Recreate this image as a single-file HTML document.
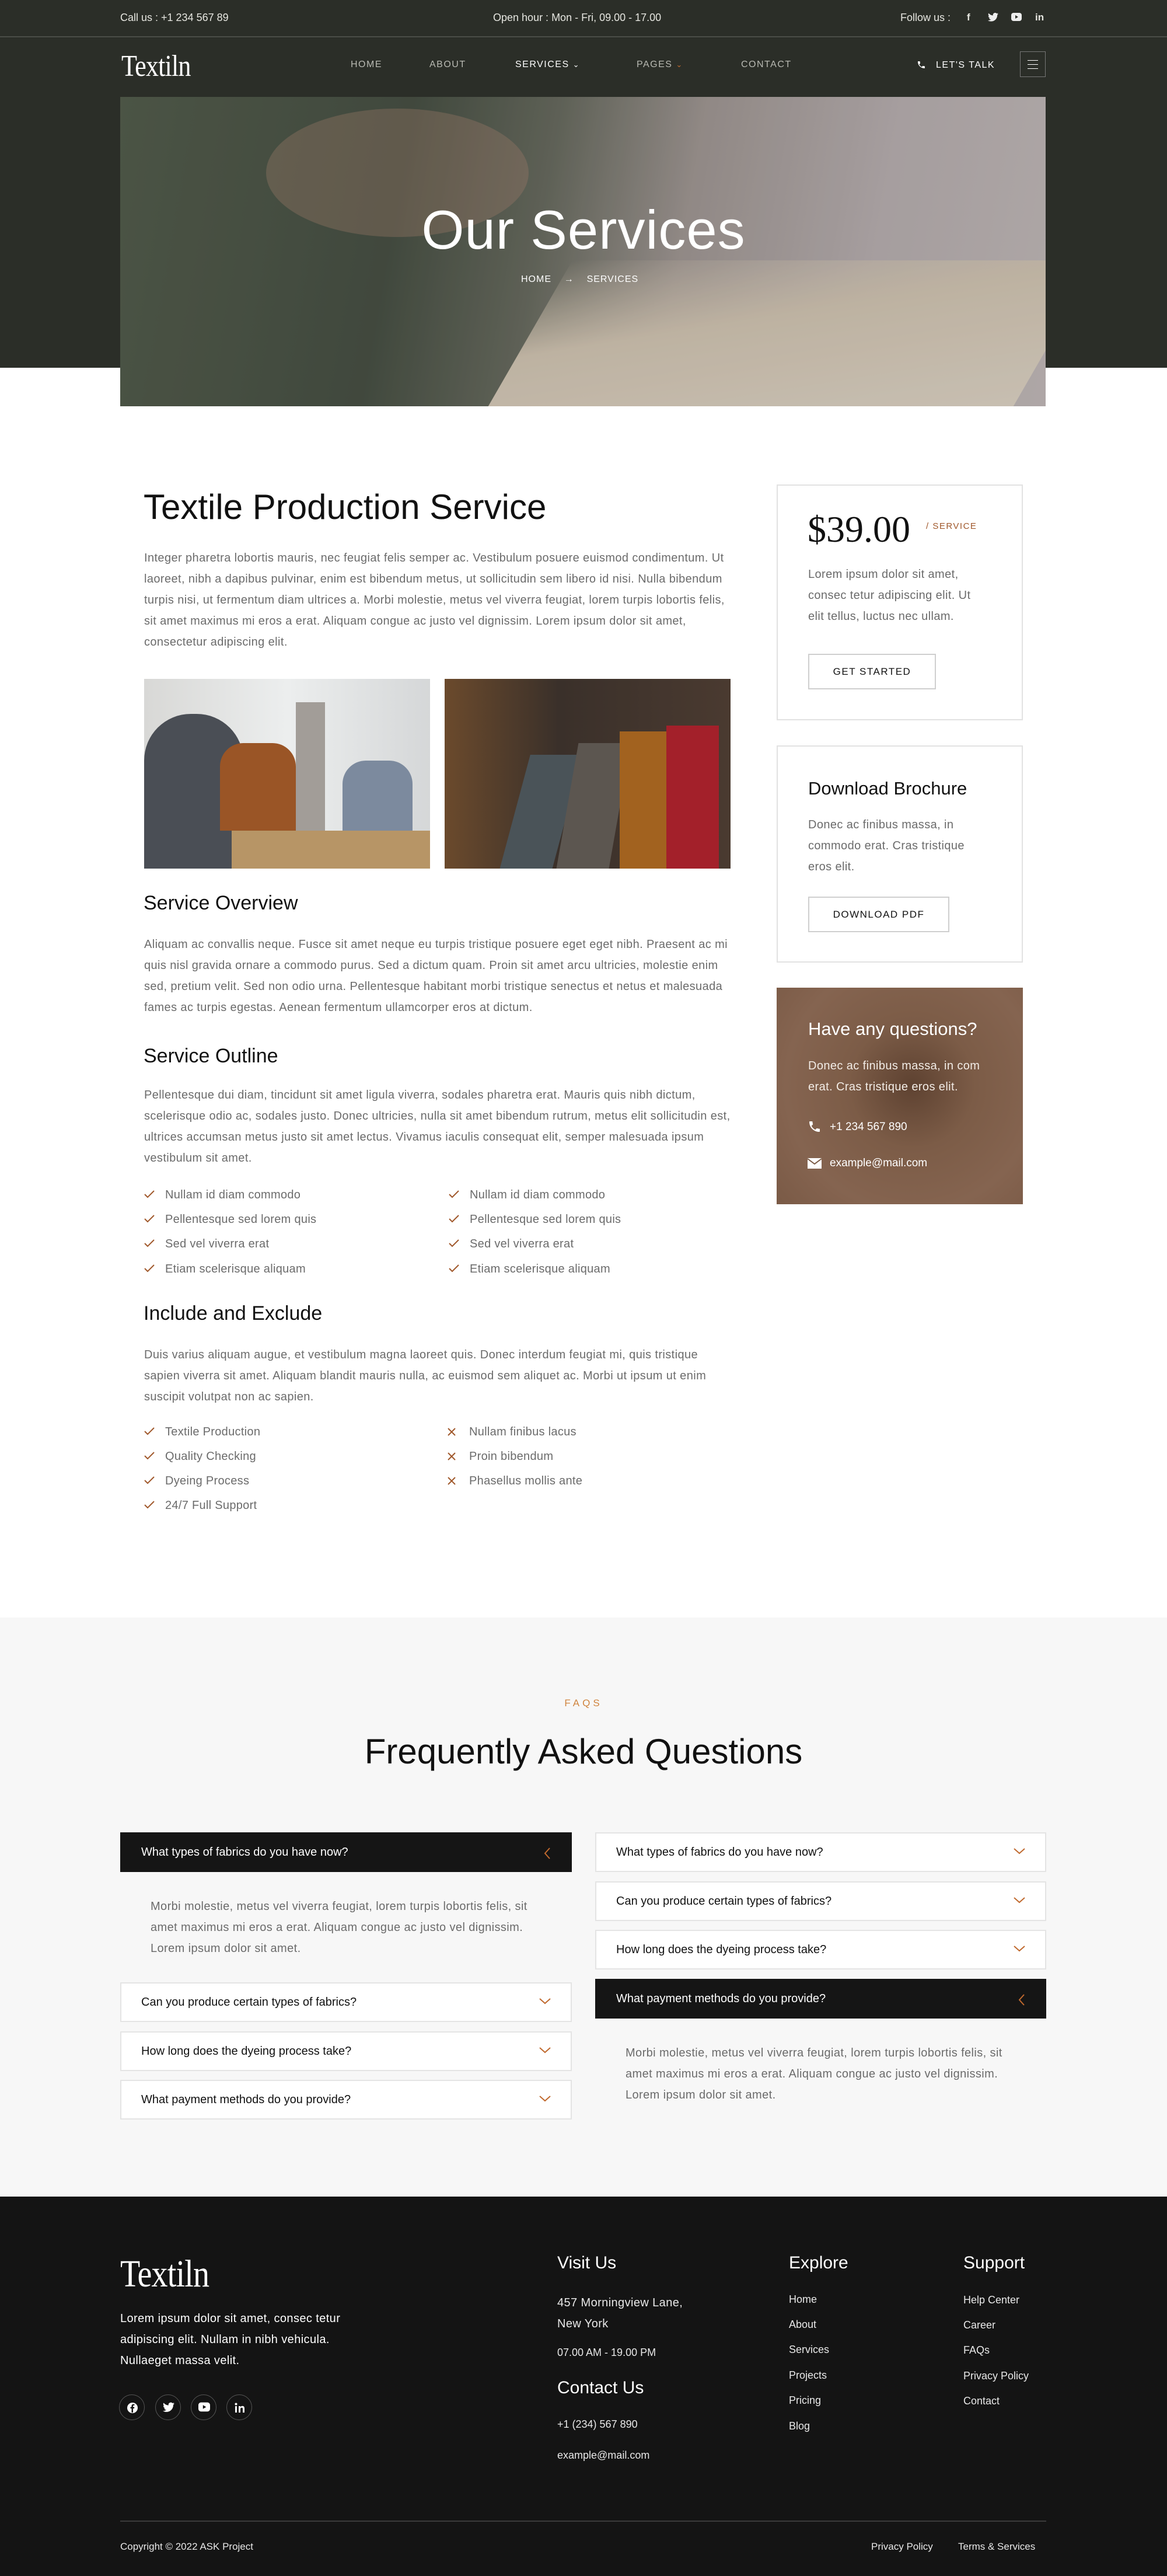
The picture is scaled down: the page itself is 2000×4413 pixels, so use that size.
<!DOCTYPE html>
<html><head><meta charset="utf-8">
<style>
*{margin:0;padding:0;box-sizing:border-box}
body{width:2000px;height:4413px;position:relative;background:#fff;font-family:"Liberation Sans",sans-serif;overflow:hidden}
.a{position:absolute}
.hdr{left:0;top:0;width:2000px;height:630px;background:#2b2e28}
.top{color:#e6e6e0;font-size:18px;top:20px}
.nav{color:#b9bab3;font-size:16px;letter-spacing:1.5px;top:102px}
.h2{font-size:34px;color:#111;font-weight:400}
.p{font-size:20px;letter-spacing:.4px;line-height:36px;color:#6b6b6b}
.li{font-size:20px;letter-spacing:.3px;color:#6b6b6b;height:30px;line-height:30px}
.li svg{position:absolute;left:-36px;top:7px}
.card{border:2px solid #e2e2e2;background:#fff}
.btn{border:2px solid #cfcfcf;font-size:17px;letter-spacing:1.5px;color:#111;text-align:center}
.q{height:68px;border:2px solid #e4e4e4;background:#fff;font-size:20px;color:#111;line-height:64px;padding-left:34px}
.q.d{background:#151515;border-color:#151515;color:#fff}
.q svg{position:absolute;right:34px;top:24px}
.fh{font-size:30px;color:#fff}
.fl{font-size:18px;color:#e8e8e8}
.soc{width:44px;height:44px;border:1px solid #555;border-radius:50%;top:4102px}
.soc svg{position:absolute;left:12px;top:12px}
</style></head><body>
<div class="a hdr"></div>
<div class="a" style="left:0;top:62px;width:2000px;height:2px;background:#4a4d47"></div>
<div class="a top" style="left:206px">Call us : +1 234 567 89</div>
<div class="a top" style="left:845px">Open hour : Mon - Fri, 09.00 - 17.00</div>
<div class="a top" style="left:1543px">Follow us :</div>
<div class="a top" style="left:1657px;font-weight:bold;font-size:17px">f</div>
<svg class="a" style="left:1693px;top:22px" width="18" height="15" viewBox="0 0 24 20"><path fill="#eee" d="M24 2.4a10 10 0 0 1-2.8.8A5 5 0 0 0 23.3.4a10 10 0 0 1-3.1 1.2A4.9 4.9 0 0 0 11.8 6 14 14 0 0 1 1.7.9a4.9 4.9 0 0 0 1.5 6.6A4.9 4.9 0 0 1 1 6.9a4.9 4.9 0 0 0 3.9 4.8 5 5 0 0 1-2.2.1 4.9 4.9 0 0 0 4.6 3.4A9.9 9.9 0 0 1 0 17.3 14 14 0 0 0 7.5 19.5c9.1 0 14-7.5 14-14v-.6A10 10 0 0 0 24 2.4z"/></svg>
<svg class="a" style="left:1733px;top:22px" width="18" height="15" viewBox="0 0 18 15"><rect width="18" height="14" rx="4" fill="#eee"/><path d="M7 4v6l5-3z" fill="#2b2e28"/></svg>
<div class="a top" style="left:1774px;font-weight:bold;font-size:17px">in</div>

<div class="a" style="left:208px;top:84px;font-family:'Liberation Serif',serif;font-size:52px;color:#fff;letter-spacing:-1px;transform:scaleX(.85);transform-origin:left">Textiln</div>
<div class="a nav" style="left:601px">HOME</div>
<div class="a nav" style="left:736px">ABOUT</div>
<div class="a nav" style="left:883px;color:#fff">SERVICES <span style="font-size:13px">&#8964;</span></div>
<div class="a nav" style="left:1091px">PAGES <span style="color:#c0692e;font-size:13px">&#8964;</span></div>
<div class="a nav" style="left:1270px">CONTACT</div>
<svg class="a" style="left:1571px;top:101px" width="16" height="20" viewBox="0 0 24 24"><path fill="#fff" d="M6.6 10.8a15 15 0 0 0 6.6 6.6l2.2-2.2c.3-.3.7-.4 1-.2a11 11 0 0 0 3.6.6c.6 0 1 .4 1 1V20c0 .6-.4 1-1 1A17 17 0 0 1 3 4c0-.6.4-1 1-1h3.5c.6 0 1 .4 1 1 0 1.3.2 2.5.6 3.6.1.3 0 .7-.2 1z"/></svg>
<div class="a" style="left:1604px;top:103px;color:#fff;font-size:16px;letter-spacing:1.5px">LET'S TALK</div>
<div class="a" style="left:1748px;top:88px;width:44px;height:44px;border:1px solid #777"><div class="a" style="left:12px;top:14px;width:18px;height:1px;background:#fff;box-shadow:0 7px #fff,0 14px #fff"></div></div>

<div class="a" style="left:206px;top:166px;width:1586px;height:530px;overflow:hidden;background:linear-gradient(100deg,#56604f 0%,#4a5346 30%,#6b6e62 45%,#a59c98 60%,#bdb4b5 80%,#c6bebd 100%)">
 <div class="a" style="left:700px;top:280px;width:900px;height:260px;background:linear-gradient(170deg,rgba(220,205,185,0) 0%,#d8cbb8 40%,#e4dacb 100%);transform:skewX(-30deg)"></div>
 <div class="a" style="left:250px;top:20px;width:450px;height:220px;background:rgba(180,140,120,.35);border-radius:50%"></div>
 <div class="a" style="left:0;top:0;width:100%;height:100%;background:rgba(0,0,0,.12)"></div>
</div>
<div class="a" style="left:0;top:340px;width:2000px;text-align:center;color:#fff;font-size:94px;font-weight:300;letter-spacing:1px">Our Services</div>
<div class="a" style="left:893px;top:470px;color:#fff;font-size:16px;letter-spacing:1px">HOME &nbsp;&nbsp;&nbsp;&rarr;&nbsp;&nbsp;&nbsp; SERVICES</div>

<div class="a" style="left:246px;top:834px;font-size:60px;color:#111">Textile Production Service</div>
<div class="a p" style="left:247px;top:938px;width:1010px">Integer pharetra lobortis mauris, nec feugiat felis semper ac. Vestibulum posuere euismod condimentum. Ut laoreet, nibh a dapibus pulvinar, enim est bibendum metus, ut sollicitudin sem libero id nisi. Nulla bibendum turpis nisi, ut fermentum diam ultrices a. Morbi molestie, metus vel viverra feugiat, lorem turpis lobortis felis, sit amet maximus mi eros a erat. Aliquam congue ac justo vel dignissim. Lorem ipsum dolor sit amet, consectetur adipiscing elit.</div>
<div class="a" style="left:247px;top:1163px;width:490px;height:325px;overflow:hidden;background:linear-gradient(90deg,#d8d8d6,#eceeee 50%,#d5d7d8)">
 <div class="a" style="left:0;top:60px;width:170px;height:270px;background:#4a4e55;border-radius:80px 80px 0 0"></div>
 <div class="a" style="left:130px;top:110px;width:130px;height:150px;background:#9a5526;border-radius:40px 40px 0 0"></div>
 <div class="a" style="left:260px;top:40px;width:50px;height:230px;background:#a29d98"></div>
 <div class="a" style="left:340px;top:140px;width:120px;height:120px;background:#7c8a9e;border-radius:40px 40px 0 0"></div>
 <div class="a" style="left:150px;top:260px;width:340px;height:65px;background:#b79566"></div>
</div>
<div class="a" style="left:762px;top:1163px;width:490px;height:325px;overflow:hidden;background:linear-gradient(90deg,#6b4a2c,#3a302a 40%,#4a3a30)">
 <div class="a" style="left:120px;top:130px;width:90px;height:200px;background:#4a5358;transform:skewX(-15deg)"></div>
 <div class="a" style="left:210px;top:110px;width:90px;height:220px;background:#5c5650;transform:skewX(-10deg)"></div>
 <div class="a" style="left:300px;top:90px;width:80px;height:240px;background:#a2621f"></div>
 <div class="a" style="left:380px;top:80px;width:90px;height:250px;background:#a3202a"></div>
</div>
<div class="a h2" style="left:246px;top:1528px">Service Overview</div>
<div class="a p" style="left:247px;top:1600px;width:1010px">Aliquam ac convallis neque. Fusce sit amet neque eu turpis tristique posuere eget eget nibh. Praesent ac mi quis nisl gravida ornare a commodo purus. Sed a dictum quam. Proin sit amet arcu ultricies, molestie enim sed, pretium velit. Sed non odio urna. Pellentesque habitant morbi tristique senectus et netus et malesuada fames ac turpis egestas. Aenean fermentum ullamcorper eros at dictum.</div>
<div class="a h2" style="left:246px;top:1790px">Service Outline</div>
<div class="a p" style="left:247px;top:1858px;width:1010px">Pellentesque dui diam, tincidunt sit amet ligula viverra, sodales pharetra erat. Mauris quis nibh dictum, scelerisque odio ac, sodales justo. Donec ultricies, nulla sit amet bibendum rutrum, metus elit sollicitudin est, ultrices accumsan metus justo sit amet lectus. Vivamus iaculis consequat elit, semper malesuada ipsum vestibulum sit amet.</div>

<div class="a li" style="left:283px;top:2032px">Nullam id diam commodo<svg width="18" height="14"><path d="M1 7l5 5L17 1" stroke="#a0582b" stroke-width="2" fill="none"/></svg></div>
<div class="a li" style="left:283px;top:2074px">Pellentesque sed lorem quis<svg width="18" height="14"><path d="M1 7l5 5L17 1" stroke="#a0582b" stroke-width="2" fill="none"/></svg></div>
<div class="a li" style="left:283px;top:2116px">Sed vel viverra erat<svg width="18" height="14"><path d="M1 7l5 5L17 1" stroke="#a0582b" stroke-width="2" fill="none"/></svg></div>
<div class="a li" style="left:283px;top:2159px">Etiam scelerisque aliquam<svg width="18" height="14"><path d="M1 7l5 5L17 1" stroke="#a0582b" stroke-width="2" fill="none"/></svg></div>
<div class="a li" style="left:805px;top:2032px">Nullam id diam commodo<svg width="18" height="14"><path d="M1 7l5 5L17 1" stroke="#a0582b" stroke-width="2" fill="none"/></svg></div>
<div class="a li" style="left:805px;top:2074px">Pellentesque sed lorem quis<svg width="18" height="14"><path d="M1 7l5 5L17 1" stroke="#a0582b" stroke-width="2" fill="none"/></svg></div>
<div class="a li" style="left:805px;top:2116px">Sed vel viverra erat<svg width="18" height="14"><path d="M1 7l5 5L17 1" stroke="#a0582b" stroke-width="2" fill="none"/></svg></div>
<div class="a li" style="left:805px;top:2159px">Etiam scelerisque aliquam<svg width="18" height="14"><path d="M1 7l5 5L17 1" stroke="#a0582b" stroke-width="2" fill="none"/></svg></div>

<div class="a h2" style="left:246px;top:2231px">Include and Exclude</div>
<div class="a p" style="left:247px;top:2303px;width:1010px">Duis varius aliquam augue, et vestibulum magna laoreet quis. Donec interdum feugiat mi, quis tristique sapien viverra sit amet. Aliquam blandit mauris nulla, ac euismod sem aliquet ac. Morbi ut ipsum ut enim suscipit volutpat non ac sapien.</div>
<div class="a li" style="left:283px;top:2438px">Textile Production<svg width="18" height="14"><path d="M1 7l5 5L17 1" stroke="#a0582b" stroke-width="2" fill="none"/></svg></div>
<div class="a li" style="left:283px;top:2480px">Quality Checking<svg width="18" height="14"><path d="M1 7l5 5L17 1" stroke="#a0582b" stroke-width="2" fill="none"/></svg></div>
<div class="a li" style="left:283px;top:2522px">Dyeing Process<svg width="18" height="14"><path d="M1 7l5 5L17 1" stroke="#a0582b" stroke-width="2" fill="none"/></svg></div>
<div class="a li" style="left:283px;top:2564px">24/7 Full Support<svg width="18" height="14"><path d="M1 7l5 5L17 1" stroke="#a0582b" stroke-width="2" fill="none"/></svg></div>
<div class="a li" style="left:804px;top:2438px">Nullam finibus lacus<svg width="16" height="16" style="left:-38px"><path d="M2 2l12 12M14 2L2 14" stroke="#a0582b" stroke-width="2"/></svg></div>
<div class="a li" style="left:804px;top:2480px">Proin bibendum<svg width="16" height="16" style="left:-38px"><path d="M2 2l12 12M14 2L2 14" stroke="#a0582b" stroke-width="2"/></svg></div>
<div class="a li" style="left:804px;top:2522px">Phasellus mollis ante<svg width="16" height="16" style="left:-38px"><path d="M2 2l12 12M14 2L2 14" stroke="#a0582b" stroke-width="2"/></svg></div>

<div class="a card" style="left:1331px;top:830px;width:422px;height:404px"></div>
<div class="a" style="left:1384px;top:870px;font-family:'Liberation Serif',serif;font-size:64px;color:#111">$39.00</div>
<div class="a" style="left:1587px;top:893px;font-size:15px;letter-spacing:1.5px;color:#a0582b">/ SERVICE</div>
<div class="a p" style="left:1385px;top:966px;width:310px">Lorem ipsum dolor sit amet, consec tetur adipiscing elit. Ut elit tellus, luctus nec ullam.</div>
<div class="a btn" style="left:1385px;top:1120px;width:219px;height:61px;line-height:57px">GET STARTED</div>

<div class="a card" style="left:1331px;top:1277px;width:422px;height:372px"></div>
<div class="a" style="left:1385px;top:1333px;font-size:31px;color:#111">Download Brochure</div>
<div class="a p" style="left:1385px;top:1395px;width:300px">Donec ac finibus massa, in commodo erat. Cras tristique eros elit.</div>
<div class="a btn" style="left:1385px;top:1536px;width:242px;height:61px;line-height:57px">DOWNLOAD PDF</div>

<div class="a" style="left:1331px;top:1692px;width:422px;height:371px;background:radial-gradient(circle at 55% 45%,#5e4231 0%,#7c5c47 35%,#856450 70%,#7a5a46 100%)"></div>
<div class="a" style="left:1385px;top:1745px;font-size:31px;color:#fff">Have any questions?</div>
<div class="a p" style="left:1385px;top:1808px;width:330px;color:#f2ece6">Donec ac finibus massa, in com erat. Cras tristique eros elit.</div>
<svg class="a" style="left:1384px;top:1918px" width="24" height="24" viewBox="0 0 24 24"><path fill="#fff" d="M6.6 10.8a15 15 0 0 0 6.6 6.6l2.2-2.2c.3-.3.7-.4 1-.2a11 11 0 0 0 3.6.6c.6 0 1 .4 1 1V20c0 .6-.4 1-1 1A17 17 0 0 1 3 4c0-.6.4-1 1-1h3.5c.6 0 1 .4 1 1 0 1.3.2 2.5.6 3.6.1.3 0 .7-.2 1z"/></svg>
<div class="a" style="left:1422px;top:1920px;font-size:19px;color:#fff">+1 234 567 890</div>
<svg class="a" style="left:1384px;top:1984px" width="24" height="18" viewBox="0 0 24 18"><rect width="24" height="18" fill="#fff"/><path d="M0 1l12 9L24 1" stroke="#7c5c47" stroke-width="2" fill="none"/></svg>
<div class="a" style="left:1422px;top:1982px;font-size:19px;color:#fff">example@mail.com</div>

<div class="a" style="left:0;top:2771px;width:2000px;height:992px;background:#f7f7f7"></div>
<div class="a" style="left:0;top:2908px;width:2000px;text-align:center;font-size:17px;letter-spacing:5px;color:#d0843e">FAQS</div>
<div class="a" style="left:0;top:2966px;width:2000px;text-align:center;font-size:60px;color:#111">Frequently Asked Questions</div>

<div class="a q d" style="left:206px;top:3139px;width:774px">What types of fabrics do you have now?<svg width="12" height="20"><path d="M10 1L2 10l8 9" stroke="#c0692e" stroke-width="2" fill="none"/></svg></div>
<div class="a p" style="left:258px;top:3248px;width:690px">Morbi molestie, metus vel viverra feugiat, lorem turpis lobortis felis, sit amet maximus mi eros a erat. Aliquam congue ac justo vel dignissim. Lorem ipsum dolor sit amet.</div>
<div class="a q" style="left:206px;top:3396px;width:774px">Can you produce certain types of fabrics?<svg width="20" height="12"><path d="M1 2l9 8 9-8" stroke="#c0692e" stroke-width="2" fill="none"/></svg></div>
<div class="a q" style="left:206px;top:3480px;width:774px">How long does the dyeing process take?<svg width="20" height="12"><path d="M1 2l9 8 9-8" stroke="#c0692e" stroke-width="2" fill="none"/></svg></div>
<div class="a q" style="left:206px;top:3563px;width:774px">What payment methods do you provide?<svg width="20" height="12"><path d="M1 2l9 8 9-8" stroke="#c0692e" stroke-width="2" fill="none"/></svg></div>

<div class="a q" style="left:1020px;top:3139px;width:773px">What types of fabrics do you have now?<svg width="20" height="12"><path d="M1 2l9 8 9-8" stroke="#c0692e" stroke-width="2" fill="none"/></svg></div>
<div class="a q" style="left:1020px;top:3223px;width:773px">Can you produce certain types of fabrics?<svg width="20" height="12"><path d="M1 2l9 8 9-8" stroke="#c0692e" stroke-width="2" fill="none"/></svg></div>
<div class="a q" style="left:1020px;top:3306px;width:773px">How long does the dyeing process take?<svg width="20" height="12"><path d="M1 2l9 8 9-8" stroke="#c0692e" stroke-width="2" fill="none"/></svg></div>
<div class="a q d" style="left:1020px;top:3390px;width:773px">What payment methods do you provide?<svg width="12" height="20"><path d="M10 1L2 10l8 9" stroke="#c0692e" stroke-width="2" fill="none"/></svg></div>
<div class="a p" style="left:1072px;top:3499px;width:690px">Morbi molestie, metus vel viverra feugiat, lorem turpis lobortis felis, sit amet maximus mi eros a erat. Aliquam congue ac justo vel dignissim. Lorem ipsum dolor sit amet.</div>

<div class="a" style="left:0;top:3763px;width:2000px;height:650px;background:#141414"></div>
<div class="a" style="left:206px;top:3858px;font-family:'Liberation Serif',serif;font-size:66px;color:#fff;letter-spacing:-1px;transform:scaleX(.85);transform-origin:left">Textiln</div>
<div class="a p" style="left:206px;top:3954px;width:420px;color:#fff">Lorem ipsum dolor sit amet, consec tetur adipiscing elit. Nullam in nibh vehicula. Nullaeget massa velit.</div>
<div class="a soc" style="left:204px"><svg width="20" height="20" viewBox="0 0 20 20"><circle cx="10" cy="10" r="9" fill="#fff"/><path d="M11 18v-7h2l.3-2.5H11V7c0-.7.3-1.2 1.2-1.2h1.3V3.7c-.3 0-1-.1-1.9-.1-1.900 0-3.1 1.1-3.1 3.2v1.7H6.5V11h2v7z" fill="#141414"/></svg></div>
<div class="a soc" style="left:266px"><svg width="20" height="18" viewBox="0 0 24 20"><path fill="#fff" d="M24 2.4a10 10 0 0 1-2.8.8A5 5 0 0 0 23.3.4a10 10 0 0 1-3.1 1.2A4.9 4.9 0 0 0 11.8 6 14 14 0 0 1 1.7.9a4.9 4.9 0 0 0 1.5 6.6A4.9 4.9 0 0 1 1 6.9a4.9 4.9 0 0 0 3.9 4.8 5 5 0 0 1-2.2.1 4.9 4.9 0 0 0 4.6 3.4A9.9 9.9 0 0 1 0 17.3 14 14 0 0 0 7.5 19.5c9.1 0 14-7.5 14-14v-.6A10 10 0 0 0 24 2.4z"/></svg></div>
<div class="a soc" style="left:327px"><svg width="20" height="18" viewBox="0 0 18 15"><rect width="18" height="14" rx="4" fill="#fff"/><path d="M7 4v6l5-3z" fill="#141414"/></svg></div>
<div class="a soc" style="left:388px"><svg width="20" height="20" viewBox="0 0 20 20"><rect x="2" y="7" width="3" height="11" fill="#fff"/><circle cx="3.5" cy="3.5" r="2" fill="#fff"/><path d="M8 7h3v1.6c.6-1 1.8-1.8 3.4-1.8 2.6 0 3.6 1.6 3.6 4.5V18h-3v-6c0-1.4-.4-2.4-1.7-2.4S11 10.6 11 12v6H8z" fill="#fff"/></svg></div>

<div class="a fh" style="left:955px;top:3860px">Visit Us</div>
<div class="a p" style="left:955px;top:3927px;color:#e8e8e8;width:260px">457 Morningview Lane, New York</div>
<div class="a fl" style="left:955px;top:4020px">07.00 AM - 19.00 PM</div>
<div class="a fh" style="left:955px;top:4074px">Contact Us</div>
<div class="a fl" style="left:955px;top:4143px">+1 (234) 567 890</div>
<div class="a fl" style="left:955px;top:4196px">example@mail.com</div>

<div class="a fh" style="left:1352px;top:3860px">Explore</div>
<div class="a fl" style="left:1352px;top:3929px">Home</div>
<div class="a fl" style="left:1352px;top:3972px">About</div>
<div class="a fl" style="left:1352px;top:4015px">Services</div>
<div class="a fl" style="left:1352px;top:4059px">Projects</div>
<div class="a fl" style="left:1352px;top:4102px">Pricing</div>
<div class="a fl" style="left:1352px;top:4146px">Blog</div>

<div class="a fh" style="left:1651px;top:3860px">Support</div>
<div class="a fl" style="left:1651px;top:3930px">Help Center</div>
<div class="a fl" style="left:1651px;top:3973px">Career</div>
<div class="a fl" style="left:1651px;top:4016px">FAQs</div>
<div class="a fl" style="left:1651px;top:4060px">Privacy Policy</div>
<div class="a fl" style="left:1651px;top:4103px">Contact</div>

<div class="a" style="left:206px;top:4318px;width:1587px;height:2px;background:#3a3a3a"></div>
<div class="a fl" style="left:206px;top:4353px;font-size:17px">Copyright © 2022 ASK Project</div>
<div class="a fl" style="left:1493px;top:4353px;font-size:17px">Privacy Policy</div>
<div class="a fl" style="left:1642px;top:4353px;font-size:17px">Terms &amp; Services</div>
</body></html>
